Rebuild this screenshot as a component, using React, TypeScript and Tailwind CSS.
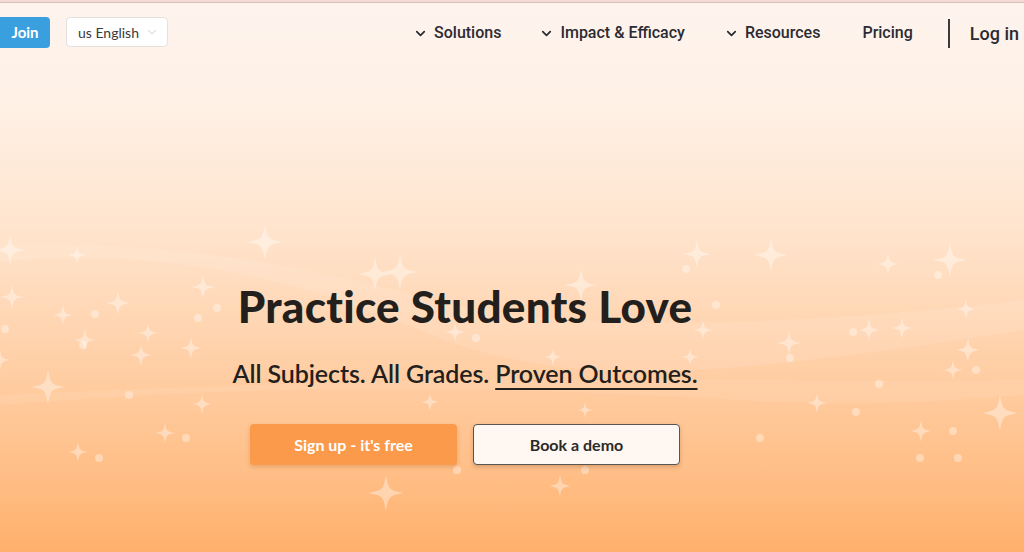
import { ChevronDown } from "lucide-react";

const stars: [number, number, number][] = [
  [10, 250, 15], [77, 255, 9], [12, 297, 12], [118, 303, 12], [63, 315, 10],
  [85, 340, 11], [148, 333, 10], [141, 355, 11], [191, 348, 11], [0, 360, 10],
  [48, 387, 17], [203, 287, 12], [202, 404, 10], [165, 433, 10], [78, 452, 10],
  [265, 242, 18], [375, 274, 17], [400, 272, 18], [581, 285, 16], [697, 254, 14],
  [771, 255, 17], [888, 264, 11], [950, 260, 17], [966, 309, 10], [968, 350, 12],
  [953, 370, 10], [1000, 413, 18], [869, 330, 11], [902, 328, 11], [789, 343, 12],
  [817, 403, 10], [921, 431, 11], [386, 493, 18], [560, 486, 11], [455, 332, 10],
  [703, 330, 10], [690, 357, 9], [553, 357, 9], [430, 402, 9], [585, 410, 8],
];

const dots: [number, number][] = [
  [95, 314], [83, 345], [198, 318], [217, 308], [5, 329], [129, 395], [186, 438],
  [99, 458], [686, 269], [938, 275], [976, 370], [853, 332], [790, 358], [879, 384],
  [856, 412], [953, 431], [958, 458], [760, 438], [457, 470], [585, 470], [476, 338],
  [920, 458], [716, 305],
];

function starPath(x: number, y: number, r: number) {
  const k = r * 0.16;
  return `M${x},${y - r} C${x + k},${y - k} ${x + k},${y - k} ${x + r},${y} C${x + k},${y + k} ${x + k},${y + k} ${x},${y + r} C${x - k},${y + k} ${x - k},${y + k} ${x - r},${y} C${x - k},${y - k} ${x - k},${y - k} ${x},${y - r} Z`;
}

function Sparkles() {
  return (
    <svg className="pointer-events-none absolute inset-0" width="1024" height="552" viewBox="0 0 1024 552">
      <path d="M0,262 C120,250 260,262 420,330 C560,390 700,380 1024,330 L1024,300 C760,330 560,330 430,300 C300,262 150,240 0,245 Z" fill="#ffffff" opacity="0.1" />
      <path d="M0,405 C200,390 400,380 740,400 C860,408 960,400 1024,395 L1024,380 C800,385 500,370 0,395 Z" fill="#ffffff" opacity="0.08" />
      {stars.map(([x, y, r], i) => (
        <path key={i} d={starPath(x, y, r)} fill="#ffffff" opacity="0.38" />
      ))}
      {dots.map(([x, y], i) => (
        <circle key={i} cx={x} cy={y} r="4" fill="#ffffff" opacity="0.36" />
      ))}
    </svg>
  );
}

export default function App() {
  const nav = [
    { label: "Solutions", drop: true, cls: "ml-0" },
    { label: "Impact & Efficacy", drop: true, cls: "ml-[38px]" },
    { label: "Resources", drop: true, cls: "ml-[39px]" },
    { label: "Pricing", drop: false, cls: "ml-[42px]" },
  ];

  return (
    <div className="relative h-[552px] w-[1024px] overflow-hidden bg-[linear-gradient(180deg,#fef4ee_0%,#fff1e6_18%,#ffe4cd_42%,#ffd0a8_65%,#ffbf88_85%,#ffb06c_100%)] font-['Roboto',sans-serif]">
      <Sparkles />
      <div className="relative h-[3px] border-b border-[#d9c2ba] bg-[#f4dad2]" />

      {/* Header */}
      <header className="relative flex h-[60px] items-start pt-[14px]">
        <button className="flex h-[31px] w-[50px] items-center justify-center rounded-r-[4px] bg-[#399fde] text-[15px] font-bold text-white font-['Lato',sans-serif]">
          Join
        </button>
        <div className="ml-[16px] flex h-[30px] w-[102px] items-center gap-[6px] rounded-[4px] border border-[#e4e0de] bg-white pl-[11px] text-[14px] text-[#3a3a3a] font-['Lato',sans-serif]">
          us English
          <ChevronDown className="h-[14px] w-[14px] text-[#c4c4c4]" strokeWidth={1.5} />
        </div>

        <nav className="ml-auto flex h-[32px] items-center pr-[5px] text-[16px] font-medium text-[#2b2b33]">
          {nav.map((n) => (
            <div key={n.label} className={`flex items-center gap-[6px] ${n.cls}`}>
              {n.drop && <ChevronDown className="h-[15px] w-[15px]" strokeWidth={2.8} />}
              <span>{n.label}</span>
            </div>
          ))}
          <div className="ml-[35px] h-[29px] w-[2px] bg-[#3a3a3a]" />
          <span className="ml-[20px] text-[18px] font-medium">Log in</span>
        </nav>
      </header>

      {/* Hero */}
      <section className="relative flex flex-col items-center pr-[94px] pt-[217px] text-[#231f1c] font-['Lato',sans-serif]">
        <h1 className="text-[44px] font-black leading-[52px] tracking-[0.3px]">Practice Students Love</h1>
        <p className="mt-[26px] text-[25px] font-semibold leading-[30px] tracking-[-0.1px]">
          All Subjects. All Grades. <span className="underline decoration-2 underline-offset-[5px]">Proven Outcomes.</span>
        </p>
        <div className="mt-[36px] flex gap-[16px]">
          <button className="h-[41px] w-[207px] rounded-[4px] bg-[#fb9a4a] text-[16px] font-bold text-white shadow-[0_2px_4px_rgba(160,80,20,0.25)]">
            Sign up - it's free
          </button>
          <button className="h-[41px] w-[207px] rounded-[4px] border border-[#5a5550] bg-[#fff7f1] text-[16px] font-bold text-[#2a2a2a] shadow-[0_2px_4px_rgba(100,60,30,0.25)]">
            Book a demo
          </button>
        </div>
      </section>
    </div>
  );
}
